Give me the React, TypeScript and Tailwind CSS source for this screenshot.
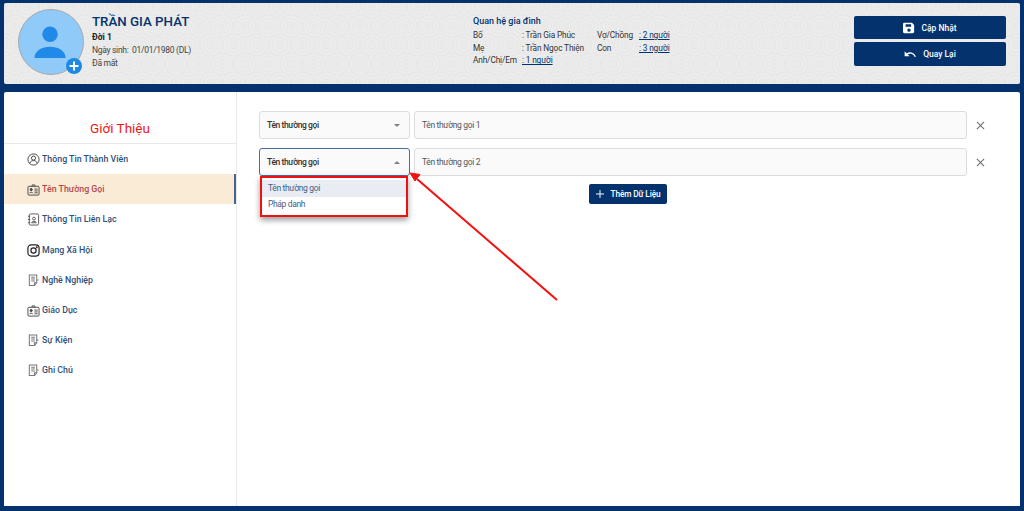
const NAVY_TEXT = "text-[#03326c]";

function Spiral({ x, y }: { x: number; y: number }) {
  return (
    <g transform={`translate(${x} ${y})`} fill="none" stroke="#e5e5e5" strokeWidth="0.8">
      <circle r="11" />
      <circle r="7.500" />
      <circle r="4" />
      <circle r="1.500" />
    </g>
  );
}

function Texture() {
  const spots = [];
  for (let r = 0; r < 5; r++) {
    for (let c = 0; c < 46; c++) {
      spots.push(<Spiral key={`${r}-${c}`} x={c * 23 + (r % 2) * 11} y={r * 19 + 4} />);
    }
  }
  return (
    <svg className="absolute inset-0 h-full w-full" aria-hidden="true">
      {spots}
    </svg>
  );
}

function Avatar() {
  return (
    <div className="relative h-[66px] w-[66px] shrink-0 rounded-full border border-[#a9a9a9] bg-[#90caf9]">
      <svg viewBox="0 0 66 66" className="h-full w-full" aria-hidden="true">
        <circle cx="32" cy="25" r="8" fill="#2189e8" />
        <path d="M16 49.500c0-7.500 8-11.500 16-11.500s16 4 16 11.500z" fill="#2189e8" />
      </svg>
      <div className="absolute bottom-0 right-[1px] flex h-[16px] w-[16px] items-center justify-center rounded-full bg-[#1e88e5]">
        <svg viewBox="0 0 16 16" className="h-[16px] w-[16px]" aria-hidden="true">
          <path d="M8 3.500v9M3.500 8h9" stroke="#fff" strokeWidth="2" />
        </svg>
      </div>
    </div>
  );
}

function PersonCircleIcon() {
  return (
    <svg viewBox="0 0 14 14" className="h-[13px] w-[13px]" fill="none" stroke="#3c3c3c" strokeWidth="1" aria-hidden="true">
      <circle cx="7" cy="7" r="6" />
      <circle cx="7" cy="5.500" r="2.200" />
      <path d="M3 11c.6-2 2.200-2.800 4-2.800s3.400.8 4 2.800" />
    </svg>
  );
}

function CardIcon() {
  return (
    <svg viewBox="0 0 14 13" className="h-[12px] w-[13px]" fill="none" stroke="#444" strokeWidth="1" aria-hidden="true">
      <rect x="1" y="2.500" width="12" height="9.500" rx="1" />
      <path d="M5.500 2.500V1h3v1.500" />
      <circle cx="4.500" cy="6" r="1.200" fill="#444" />
      <path d="M2.800 10c0-1.500 3.400-1.500 3.400 0M8 5.500h3.500M8 7.500h3.500M8 9.500h3.500" />
    </svg>
  );
}

function ContactIcon() {
  return (
    <svg viewBox="0 0 14 14" className="h-[13px] w-[13px]" fill="none" stroke="#555" strokeWidth="1" aria-hidden="true">
      <rect x="2.500" y="1" width="10" height="12" rx="1.500" />
      <path d="M1 3.500h2.500M1 7h2.500M1 10.500h2.500" />
      <circle cx="7.500" cy="6" r="1.500" />
      <path d="M5 10.500c0-2 5-2 5 0z" />
    </svg>
  );
}

function InstagramIcon() {
  return (
    <svg viewBox="0 0 14 14" className="h-[13px] w-[13px]" fill="none" stroke="#222" strokeWidth="1.300" aria-hidden="true">
      <rect x="1" y="1" width="12" height="12" rx="3.500" />
      <circle cx="7" cy="7" r="2.800" />
      <circle cx="10.500" cy="3.500" r=".4" />
    </svg>
  );
}

function NoteIcon() {
  return (
    <svg viewBox="0 0 14 14" className="h-[13px] w-[13px]" fill="none" stroke="#777" strokeWidth="1.100" aria-hidden="true">
      <path d="M2.500 1h8v8.500l-2.500 3h-5.500z" />
      <path d="M4.500 3.500h4M4.500 5.500h4M4.500 7.500h4M10.500 6.500h2M8 12.500v-3h2.500" />
    </svg>
  );
}

function SaveIcon() {
  return (
    <svg viewBox="0 0 14 14" className="h-[12px] w-[12px]" aria-hidden="true">
      <path fillRule="evenodd" fill="#fff" d="M1.500 1h9L13 3.500v8a1.500 1.500 0 0 1-1.500 1.500h-10A1.500 1.500 0 0 1 0 11.500v-9A1.500 1.500 0 0 1 1.500 1zM3 2.500V5.500h6.500V2.500zM7 7.500a2 2 0 1 0 0 4 2 2 0 0 0 0-4z" />
    </svg>
  );
}

function UndoIcon() {
  return (
    <svg viewBox="0 0 14 10" className="h-[9px] w-[13px]" fill="none" aria-hidden="true">
      <path d="M3 4.500C6 2.500 10 3 12.500 7.500" stroke="#fff" strokeWidth="1.500" />
      <path d="M0.500 1.500v5.500h5.500z" fill="#fff" />
    </svg>
  );
}

function CloseIcon() {
  return (
    <svg viewBox="0 0 10 10" className="h-[9px] w-[9px]" stroke="#6f6f6f" strokeWidth="1.200" aria-hidden="true">
      <path d="M1 1l8 8M9 1l-8 8" />
    </svg>
  );
}

const menu = [
  { label: "Thông Tin Thành Viên", icon: <PersonCircleIcon /> },
  { label: "Tên Thường Gọi", icon: <CardIcon />, active: true },
  { label: "Thông Tin Liên Lạc", icon: <ContactIcon /> },
  { label: "Mạng Xã Hội", icon: <InstagramIcon /> },
  { label: "Nghề Nghiệp", icon: <NoteIcon /> },
  { label: "Giáo Dục", icon: <CardIcon /> },
  { label: "Sự Kiện", icon: <NoteIcon /> },
  { label: "Ghi Chú", icon: <NoteIcon /> },
];

function ChevronShape({ up }: { up?: boolean }) {
  return (
    <span
      className={`h-0 w-0 border-x-[3px] border-x-transparent ${
        up ? "border-b-[3px] border-b-[#808080]" : "border-t-[3px] border-t-[#808080]"
      }`}
    />
  );
}

function NameRow({ value, open }: { value: string; open?: boolean }) {
  return (
    <div className="mr-[35px] flex items-center">
      <div
        className={`relative flex h-[28px] w-[151px] shrink-0 items-center justify-between rounded-[3px] border bg-[#fafafa] pl-[7px] pr-[9px] ${
          open ? "border-[#4a6f9c]" : "border-[#dcdcdc]"
        }`}
      >
        <span className="text-[8.500px] font-medium tracking-[-0.4px] text-[#333]">Tên thường gọi</span>
        <ChevronShape up={open} />
      </div>
      <div className="ml-[4px] flex h-[28px] flex-1 items-center rounded-[3px] border border-[#dcdcdc] bg-[#fafafa] px-[7px] text-[8.500px] tracking-[-0.35px] text-[#555]">
        {value}
      </div>
      <div className="ml-[9px] flex w-[9px] justify-center">
        <CloseIcon />
      </div>
    </div>
  );
}

export default function App() {
  return (
    <div
      className={`h-[511px] w-[1024px] overflow-hidden bg-[#03326c] px-[4px] pt-[3px] pb-[5px] ${NAVY_TEXT}`}
      style={{ fontFamily: "Roboto, 'Liberation Sans', sans-serif" }}
    >
      <header className="relative flex h-[81px] overflow-hidden rounded-[2px] bg-[#ececec]">
        <Texture />
        <div className="relative flex w-full items-start pl-[14px] pt-[6px]">
          <Avatar />
          <div className="ml-[8px] w-[381px] shrink-0">
            <h1 className="mt-[4px] text-[13.300px] leading-[17px] font-medium text-[#03326c]">TRẦN GIA PHÁT</h1>
            <p className="mt-[2px] text-[8.500px] leading-[11px] font-bold text-[#222]">Đời 1</p>
            <p className="mt-[2px] text-[8.500px] leading-[11px] tracking-[-0.3px] text-[#444]">Ngày sinh:&nbsp; 01/01/1980 (DL)</p>
            <p className="mt-[2px] text-[8.500px] leading-[11px] tracking-[-0.3px] text-[#444]">Đã mất</p>
          </div>
          <div className="mt-[6px] w-[381px] shrink-0 text-[8.300px] leading-[12.800px] tracking-[-0.15px] text-[#333]">
            <p className="mb-[1px] text-[9px] font-medium tracking-normal text-[#03326c]">Quan hệ gia đình</p>
            <div className="grid grid-cols-[49px_75px_34px_auto] justify-start">
              <span>Bố</span>
              <span>: Trần Gia Phúc</span>
              <span className="whitespace-nowrap">Vợ/Chồng</span>
              <span className="ml-[8px] text-[#03326c] underline">: 2 người</span>
              <span>Mẹ</span>
              <span className="whitespace-nowrap">: Trần Ngọc Thiện</span>
              <span>Con</span>
              <span className="ml-[8px] text-[#03326c] underline">: 3 người</span>
              <span className="whitespace-nowrap">Anh/Chị/Em</span>
              <span className="text-[#03326c] underline">: 1 người</span>
            </div>
          </div>
          <div className="mt-[7px] flex w-[152px] shrink-0 flex-col gap-[3px]">
            <button className="flex h-[23px] items-center justify-center gap-[6px] rounded-[2px] bg-[#03326c] pt-[1px] text-[8.500px] font-medium text-white">
              <SaveIcon />
              Cập Nhật
            </button>
            <button className="flex h-[24px] items-center justify-center gap-[6px] rounded-[2px] bg-[#03326c] pt-[1px] text-[8.500px] font-medium text-white">
              <UndoIcon />
              Quay Lại
            </button>
          </div>
        </div>
      </header>

      <main className="mt-[8px] flex h-[414px] overflow-hidden rounded-t-[2px] bg-white">
        <aside className="w-[233px] shrink-0 border-r border-[#e8e8e8]">
          <h2 className="flex h-[51px] items-end justify-center pb-[6px] text-[13.500px] leading-[17px] font-normal text-[#f01616]">
            Giới Thiệu
          </h2>
          <ul className="border-t border-[#e8e8e8]">
            {menu.map((item) => (
              <li
                key={item.label}
                className={`flex h-[30.200px] items-center gap-[2px] pl-[23px] pt-[1px] text-[8.800px] font-medium ${
                  item.active ? "border-r-2 border-[#43688f] bg-[#faebd7] text-[#b5484c]" : "text-[#2f5178]"
                }`}
              >
                <span className="flex w-[13px] justify-center">{item.icon}</span>
                {item.label}
              </li>
            ))}
          </ul>
        </aside>

        <section className="relative flex-1 pl-[22px] pt-[19px]">
          <div className="flex flex-col gap-[9px]">
            <NameRow value="Tên thường gọi 1" />
            <NameRow value="Tên thường gọi 2" open />
          </div>

          <div className="absolute left-[23px] top-[84px] h-[41px] w-[148px] border-2 border-[#f01010] bg-white py-[2px] shadow-[0_3px_6px_rgba(0,0,0,0.4)]">
            <div className="flex h-[17px] items-center bg-[#e9edf3] px-[6px] text-[8.500px] tracking-[-0.35px] text-[#40618a]">Tên thường gọi</div>
            <div className="flex h-[15px] items-center px-[6px] text-[8.500px] tracking-[-0.35px] text-[#40618a]">Pháp danh</div>
          </div>

          <div className="mt-[8px] flex justify-center pr-[23px]">
            <button className="flex h-[20px] w-[78px] items-center justify-center gap-[7px] rounded-[2px] bg-[#03326c] text-[8.300px] font-medium tracking-[-0.15px] text-white">
              <svg viewBox="0 0 10 10" className="h-[8px] w-[8px]" stroke="#fff" strokeWidth="1.200" aria-hidden="true">
                <path d="M5 0v10M0 5h10" />
              </svg>
              Thêm Dữ Liệu
            </button>
          </div>

          {/* red callout arrow */}
          <svg className="absolute left-0 top-0 h-[300px] w-[400px]" aria-hidden="true">
            <path d="M320 208L180 87" stroke="#f41010" strokeWidth="2" />
            <path d="M173 81l10 1.500-5 6.500z" fill="#f41010" stroke="#f41010" />
          </svg>
        </section>
      </main>
    </div>
  );
}
